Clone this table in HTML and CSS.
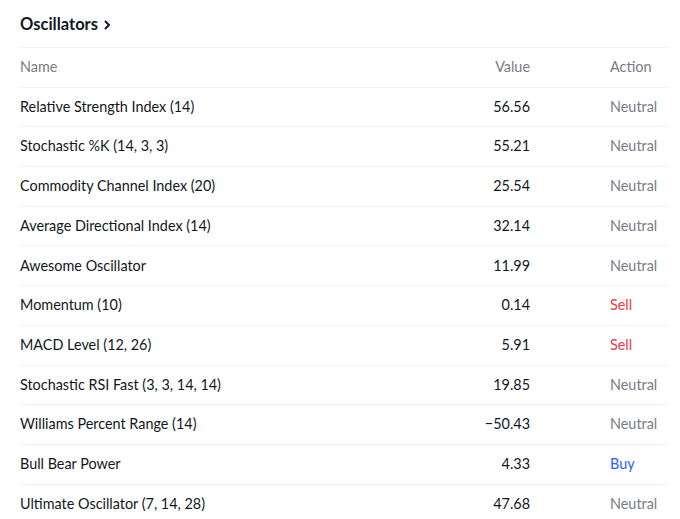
FILE: index.html
```html
<!DOCTYPE html>
<html>
<head>
<meta charset="utf-8">
<link rel="stylesheet" href="styles.css">
</head>
<body>
<div class="panel">
  <h2 class="title">Oscillators <svg class="chev" width="8" height="12" viewBox="0 0 8 12"><path d="M2 2l4 4-4 4" fill="none" stroke="#131722" stroke-width="2"/></svg></h2>
  <div class="table">
    <div class="row head"><span class="name">Name</span><span class="val">Value</span><span class="act">Action</span></div>
    <div class="row"><span class="name">Relative Strength Index (14)</span><span class="val">56.56</span><span class="act neutral">Neutral</span></div>
    <div class="row"><span class="name">Stochastic %K (14, 3, 3)</span><span class="val">55.21</span><span class="act neutral">Neutral</span></div>
    <div class="row"><span class="name">Commodity Channel Index (20)</span><span class="val">25.54</span><span class="act neutral">Neutral</span></div>
    <div class="row"><span class="name">Average Directional Index (14)</span><span class="val">32.14</span><span class="act neutral">Neutral</span></div>
    <div class="row"><span class="name">Awesome Oscillator</span><span class="val">11.99</span><span class="act neutral">Neutral</span></div>
    <div class="row"><span class="name">Momentum (10)</span><span class="val">0.14</span><span class="act sell">Sell</span></div>
    <div class="row"><span class="name">MACD Level (12, 26)</span><span class="val">5.91</span><span class="act sell">Sell</span></div>
    <div class="row"><span class="name">Stochastic RSI Fast (3, 3, 14, 14)</span><span class="val">19.85</span><span class="act neutral">Neutral</span></div>
    <div class="row"><span class="name">Williams Percent Range (14)</span><span class="val">−50.43</span><span class="act neutral">Neutral</span></div>
    <div class="row"><span class="name">Bull Bear Power</span><span class="val">4.33</span><span class="act buy">Buy</span></div>
    <div class="row"><span class="name">Ultimate Oscillator (7, 14, 28)</span><span class="val">47.68</span><span class="act neutral">Neutral</span></div>
  </div>
</div>
</body>
</html>
```
FILE: styles.css
```css
html, body { margin: 0; padding: 0; background: #fff; }
body { font-family: "Lato", "Open Sans", sans-serif; color: #131722; }
.panel { width: 648px; padding-left: 20px; }
.title {
  margin: 0;
  padding: 12px 0 11px;
  font-size: 16.5px;
  line-height: 24px;
  font-weight: 700;
  display: flex;
  align-items: center;
  gap: 5px;
}
.chev { margin-top: 1px; }
.table { border-top: 1px solid #f0f3fa; }
.row {
  display: grid;
  grid-template-columns: 1fr 120px 138px;
  align-items: center;
  height: 39.7px;
  padding-bottom: 1.5px;
  box-sizing: border-box;
  border-bottom: 1px solid #f0f3fa;
  font-size: 14.4px;
}
.row:last-child { border-bottom: none; }
.val { text-align: right; }
.act { padding-left: 80px; }
.head { color: #787b86; }
.neutral { color: #787b86; }
.sell { color: #f23645; }
.buy { color: #2962ff; }
```
